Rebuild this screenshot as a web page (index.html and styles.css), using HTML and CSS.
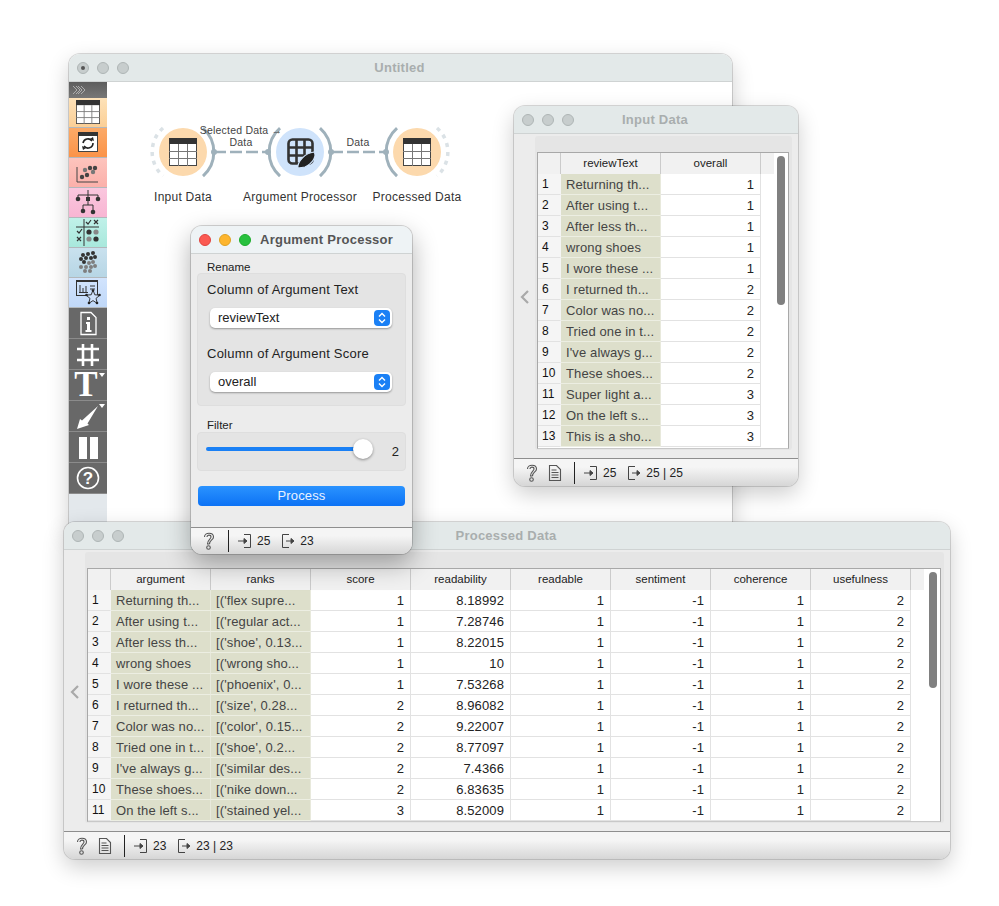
FILE: index.html
```html
<!DOCTYPE html>
<html lang="en">
<head>
<meta charset="utf-8">
<title>Orange workflow</title>
<link rel="stylesheet" href="styles.css">
</head>
<body>
<svg class="defs" width="0" height="0">
  <defs>
    <symbol id="tbl" viewBox="0 0 28 28">
      <rect x=".5" y=".5" width="27" height="27" fill="#fff" stroke="#444"/>
      <rect x="0" y="0" width="28" height="6" fill="#333"/>
      <path d="M9.5 6v22M18.5 6v22M0 13.5h28M0 20.5h28" stroke="#777" fill="none"/>
    </symbol>
    <symbol id="q" viewBox="0 0 14 20">
      <path d="M2.5 6C2.5 1 11.500 1 11.500 6C11.500 9 7.500 9 7.500 13M5 6C5 3.500 9 3.500 9 6C9 8 5.500 8.500 5.500 13H7.500" fill="none" stroke="#555" stroke-width="1.100"/>
      <circle cx="6.500" cy="16.500" r="1.800" fill="none" stroke="#555" stroke-width="1.100"/>
    </symbol>
    <symbol id="doc" viewBox="0 0 14 18">
      <path d="M1.500 1.500h7l4 4v11h-11zM3.500 6h5M3.500 8.500h7M3.500 11h7M3.500 13.500h7" fill="none" stroke="#555" stroke-width="1.100"/>
    </symbol>
    <symbol id="in" viewBox="0 0 14 16">
      <path d="M6 1.500h6.500v13H6" fill="none" stroke="#444"/>
      <path d="M0 8h8M6 5.500L9 8L6 10.500z" fill="#444" stroke="#444"/>
    </symbol>
    <symbol id="out" viewBox="0 0 14 16">
      <path d="M8 1.500H1.500v13H8" fill="none" stroke="#444"/>
      <path d="M5 8h6M10 5.500L13 8L10 10.500z" fill="#444" stroke="#444"/>
    </symbol>
  </defs>
</svg>

<section class="win win-main">
  <header class="titlebar"><span class="light dot"></span><span class="light"></span><span class="light"></span><h1 class="title">Untitled</h1></header>
  <div class="main-body">
    <nav class="toolbox">
      <div class="tb-head"><svg class="tb-chev" viewBox="0 0 14 10"><path d="M1 1l4 4-4 4M6 1l4 4-4 4M4 1l4 4-4 4M9 1l4 4-4 4" fill="none" stroke="#b5b5b5" stroke-width=".9"/></svg></div>
      <div class="tile t1"><svg class="tile-svg" viewBox="0 0 38 30"><use href="#tbl" x="7" y="2" width="24" height="24"/></svg></div>
      <div class="tile t2"><svg class="tile-svg" viewBox="0 0 38 30"><rect x="9.500" y="4.500" width="19" height="19" fill="#fff" stroke="#444"/><rect x="9" y="4" width="20" height="4" fill="#333"/><path d="M14 15a5 5 0 0 1 9-2M24 15a5 5 0 0 1-9 3" fill="none" stroke="#222" stroke-width="1.600"/><path d="M21 11l4 2-1-4zM17 20l-4-2 1 4z" fill="#222"/></svg></div>
      <div class="tile t3"><svg class="tile-svg" viewBox="0 0 38 30"><path d="M8 9v15h21" fill="none" stroke="#444"/><circle cx="13" cy="19" r="2.200" fill="#444"/><circle cx="18" cy="17" r="2.200" fill="#444"/><circle cx="16" cy="12" r="2.200" fill="#777"/><circle cx="21" cy="10" r="2.200" fill="#444"/><circle cx="24" cy="14" r="2.200" fill="#777"/><circle cx="26" cy="10" r="2.200" fill="#444"/></svg></div>
      <div class="tile t4"><svg class="tile-svg" viewBox="0 0 38 30"><path d="M9 7h20M19 2v15M9 7v3M29 7v3M14 17h10M14 17v5M24 17v5" fill="none" stroke="#333"/><circle cx="9" cy="11" r="2.300" fill="#333"/><circle cx="29" cy="11" r="2.300" fill="#333"/><rect x="17" y="9" width="4" height="4" fill="#333"/><circle cx="14" cy="23" r="2.300" fill="#333"/><circle cx="24" cy="24" r="2.300" fill="#333"/></svg></div>
      <div class="tile t5"><svg class="tile-svg" viewBox="0 0 38 30"><path d="M7 9h23M15 1v27" fill="none" stroke="#333"/><path d="M17 4l2 2 3-4M25 2l4 4M29 2l-4 4M8 13l2 2 3-4M8 19l4 4M12 19l-4 4" fill="none" stroke="#333" stroke-width="1.200"/><circle cx="20" cy="14" r="2.600" fill="#333"/><circle cx="27" cy="14" r="2.600" fill="#888"/><circle cx="20" cy="21" r="2.600" fill="#888"/><circle cx="27" cy="21" r="2.600" fill="#333"/></svg></div>
      <div class="tile t6"><svg class="tile-svg" viewBox="0 0 38 30"><g fill="#333"><circle cx="14" cy="7" r="2"/><circle cx="19" cy="6" r="2"/><circle cx="24" cy="5" r="2"/><circle cx="12" cy="11" r="2"/><circle cx="17" cy="10" r="2"/><circle cx="22" cy="10" r="2"/><circle cx="26" cy="9" r="2"/><circle cx="15" cy="14" r="2"/></g><g fill="#7f7f7f"><circle cx="20" cy="15" r="2"/><circle cx="24" cy="14" r="2"/><circle cx="12" cy="19" r="2"/><circle cx="17" cy="19" r="2"/><circle cx="22" cy="19" r="2"/><circle cx="26" cy="18" r="2"/><circle cx="16" cy="23" r="2"/><circle cx="21" cy="23" r="2"/></g></svg></div>
      <div class="tile t7"><svg class="tile-svg" viewBox="0 0 38 30"><rect x="7.500" y="2.500" width="21" height="15" fill="none" stroke="#333"/><rect x="7" y="2" width="22" height="2" fill="#333"/><path d="M11 7v7M14 10v4M17 8v6M10 14.500h9M21 8h5M21 11h5" stroke="#333" fill="none"/><path d="M24 12l1.800 4.800 5.200.3-4 3.300 1.300 5-4.300-2.800-4.300 2.800 1.300-5-4-3.300 5.200-.3z" fill="#cfe1fa" stroke="#222" stroke-width=".9"/><circle cx="24" cy="12.500" r="1.300" fill="#222"/><circle cx="30.500" cy="17" r="1.300" fill="#222"/><circle cx="17.500" cy="17" r="1.300" fill="#222"/><circle cx="28" cy="25" r="1.300" fill="#222"/><circle cx="20" cy="25" r="1.300" fill="#222"/></svg></div>
      <div class="tile dark"><svg class="tile-svg" viewBox="0 0 38 30"><path d="M12 4.500h10l5 5v17H12z" fill="none" stroke="#fff" stroke-width="1.300"/><rect x="18" y="9" width="3" height="3" fill="#fff"/><path d="M17 14h4v8h1.500v2h-6v-2H18v-6h-1z" fill="#fff"/></svg></div>
      <div class="tile dark"><svg class="tile-svg" viewBox="0 0 38 30"><path d="M14 5v22M23 5v22M8 10h22M8 21h22" fill="none" stroke="#fff" stroke-width="2.600"/></svg></div>
      <div class="tile dark"><span class="big-t">T</span><span class="caret"></span></div>
      <div class="tile dark"><svg class="tile-svg" viewBox="0 0 38 30"><path d="M8 28L11 18L13 19.500L29 5L18.500 22.500L20 24z" fill="#fff"/></svg><span class="caret"></span></div>
      <div class="tile dark"><svg class="tile-svg" viewBox="0 0 38 30"><rect x="10" y="5" width="8" height="22" fill="#fff"/><rect x="21" y="5" width="8" height="22" fill="#fff"/></svg></div>
      <div class="tile dark"><svg class="tile-svg" viewBox="0 0 38 30"><circle cx="19" cy="15" r="10.500" fill="none" stroke="#fff" stroke-width="1.600"/><text class="help-q" x="19" y="21" text-anchor="middle">?</text></svg></div>
    </nav>
    <svg class="scheme" viewBox="0 0 625 440" width="625" height="440">
      <g transform="translate(-107,-82)">
        <circle class="node-o" cx="183" cy="152" r="24"/>
        <circle class="node-b" cx="300" cy="152" r="24"/>
        <circle class="node-o" cx="417" cy="152" r="24"/>
        <use href="#tbl" x="169" y="138" width="28" height="28"/>
        <use href="#tbl" x="403" y="138" width="28" height="28"/>
        <g fill="none" stroke="#333" stroke-width="2.600">
          <rect x="288.500" y="139.500" width="24" height="24" rx="4"/>
          <path d="M296.500 140v23M304.500 140v23M288 147.500h25M288 155.500h25"/>
        </g>
        <path class="pen" d="M298 168c-1-6 7-15 16-16 3 4-1 11-9 15z"/>
        <path class="arc" d="M203 128A32 32 0 0 1 203 176"/>
        <path class="arc" d="M280 128A32 32 0 0 0 280 176"/>
        <path class="arc" d="M320 128A32 32 0 0 1 320 176"/>
        <path class="arc" d="M397 128A32 32 0 0 0 397 176"/>
        <path class="arc-off" d="M163 128A32 32 0 0 0 163 176"/>
        <path class="arc-off" d="M437 128A32 32 0 0 1 437 176"/>
        <path class="link" d="M214 152H268"/>
        <path class="link" d="M331 152H386"/>
        <circle class="pin" cx="214" cy="152" r="3"/>
        <circle class="pin" cx="268" cy="152" r="3"/>
        <circle class="pin" cx="331" cy="152" r="3"/>
        <circle class="pin" cx="386" cy="152" r="3"/>
        <text class="link-label" x="241" y="134">Selected Data →</text>
        <text class="link-label" x="241" y="146">Data</text>
        <text class="link-label" x="358" y="146">Data</text>
        <text class="node-label" x="183" y="201">Input Data</text>
        <text class="node-label" x="300" y="201">Argument Processor</text>
        <text class="node-label" x="417" y="201">Processed Data</text>
      </g>
    </svg>
  </div>
</section>

<section class="win win-input">
  <header class="titlebar"><span class="light"></span><span class="light"></span><span class="light"></span><h2 class="title">Input Data</h2></header>
  <div class="view-body">
    <div class="gutter"><svg class="chev" viewBox="0 0 10 14"><path d="M8 1L2 7l6 6" fill="none" stroke="#a9a9a9" stroke-width="2.200"/></svg></div>
    <div class="panel">
      <div class="tablebox">
        <table class="data">
          <thead><tr><th class="rn"></th><th>reviewText</th><th>overall</th></tr></thead>
          <tbody>
            <tr><td class="rn">1</td><td class="s">Returning th...</td><td class="n">1</td></tr>
            <tr><td class="rn">2</td><td class="s">After using t...</td><td class="n">1</td></tr>
            <tr><td class="rn">3</td><td class="s">After less th...</td><td class="n">1</td></tr>
            <tr><td class="rn">4</td><td class="s">wrong shoes</td><td class="n">1</td></tr>
            <tr><td class="rn">5</td><td class="s">I wore these ...</td><td class="n">1</td></tr>
            <tr><td class="rn">6</td><td class="s">I returned th...</td><td class="n">2</td></tr>
            <tr><td class="rn">7</td><td class="s">Color was no...</td><td class="n">2</td></tr>
            <tr><td class="rn">8</td><td class="s">Tried one in t...</td><td class="n">2</td></tr>
            <tr><td class="rn">9</td><td class="s">I've always g...</td><td class="n">2</td></tr>
            <tr><td class="rn">10</td><td class="s">These shoes...</td><td class="n">2</td></tr>
            <tr><td class="rn">11</td><td class="s">Super light a...</td><td class="n">3</td></tr>
            <tr><td class="rn">12</td><td class="s">On the left s...</td><td class="n">3</td></tr>
            <tr><td class="rn">13</td><td class="s">This is a sho...</td><td class="n">3</td></tr>
          </tbody>
        </table>
        <div class="scroll"><div class="thumb thumb-input"></div></div>
      </div>
    </div>
  </div>
  <footer class="status">
    <svg class="ic-q"><use href="#q"/></svg>
    <svg class="ic-doc"><use href="#doc"/></svg>
    <span class="sep"></span>
    <svg class="ic-io"><use href="#in"/></svg><span class="count c-in">25</span>
    <svg class="ic-io"><use href="#out"/></svg><span class="count">25 | 25</span>
  </footer>
</section>

<section class="win win-out">
  <header class="titlebar"><span class="light"></span><span class="light"></span><span class="light"></span><h2 class="title">Processed Data</h2></header>
  <div class="view-body">
    <div class="gutter"><svg class="chev" viewBox="0 0 10 14"><path d="M8 1L2 7l6 6" fill="none" stroke="#a9a9a9" stroke-width="2.200"/></svg></div>
    <div class="panel">
      <div class="tablebox">
        <table class="data">
          <thead><tr><th class="rn"></th><th>argument</th><th>ranks</th><th>score</th><th>readability</th><th>readable</th><th>sentiment</th><th>coherence</th><th>usefulness</th></tr></thead>
          <tbody>
            <tr><td class="rn">1</td><td class="s">Returning th...</td><td class="s">[('flex supre...</td><td class="n">1</td><td class="n">8.18992</td><td class="n">1</td><td class="n">-1</td><td class="n">1</td><td class="n">2</td></tr>
            <tr><td class="rn">2</td><td class="s">After using t...</td><td class="s">[('regular act...</td><td class="n">1</td><td class="n">7.28746</td><td class="n">1</td><td class="n">-1</td><td class="n">1</td><td class="n">2</td></tr>
            <tr><td class="rn">3</td><td class="s">After less th...</td><td class="s">[('shoe', 0.13...</td><td class="n">1</td><td class="n">8.22015</td><td class="n">1</td><td class="n">-1</td><td class="n">1</td><td class="n">2</td></tr>
            <tr><td class="rn">4</td><td class="s">wrong shoes</td><td class="s">[('wrong sho...</td><td class="n">1</td><td class="n">10</td><td class="n">1</td><td class="n">-1</td><td class="n">1</td><td class="n">2</td></tr>
            <tr><td class="rn">5</td><td class="s">I wore these ...</td><td class="s">[('phoenix', 0...</td><td class="n">1</td><td class="n">7.53268</td><td class="n">1</td><td class="n">-1</td><td class="n">1</td><td class="n">2</td></tr>
            <tr><td class="rn">6</td><td class="s">I returned th...</td><td class="s">[('size', 0.28...</td><td class="n">2</td><td class="n">8.96082</td><td class="n">1</td><td class="n">-1</td><td class="n">1</td><td class="n">2</td></tr>
            <tr><td class="rn">7</td><td class="s">Color was no...</td><td class="s">[('color', 0.15...</td><td class="n">2</td><td class="n">9.22007</td><td class="n">1</td><td class="n">-1</td><td class="n">1</td><td class="n">2</td></tr>
            <tr><td class="rn">8</td><td class="s">Tried one in t...</td><td class="s">[('shoe', 0.2...</td><td class="n">2</td><td class="n">8.77097</td><td class="n">1</td><td class="n">-1</td><td class="n">1</td><td class="n">2</td></tr>
            <tr><td class="rn">9</td><td class="s">I've always g...</td><td class="s">[('similar des...</td><td class="n">2</td><td class="n">7.4366</td><td class="n">1</td><td class="n">-1</td><td class="n">1</td><td class="n">2</td></tr>
            <tr><td class="rn">10</td><td class="s">These shoes...</td><td class="s">[('nike down...</td><td class="n">2</td><td class="n">6.83635</td><td class="n">1</td><td class="n">-1</td><td class="n">1</td><td class="n">2</td></tr>
            <tr><td class="rn">11</td><td class="s">On the left s...</td><td class="s">[('stained yel...</td><td class="n">3</td><td class="n">8.52009</td><td class="n">1</td><td class="n">-1</td><td class="n">1</td><td class="n">2</td></tr>
          </tbody>
        </table>
        <div class="scroll"><div class="thumb thumb-out"></div></div>
      </div>
    </div>
  </div>
  <footer class="status">
    <svg class="ic-q"><use href="#q"/></svg>
    <svg class="ic-doc"><use href="#doc"/></svg>
    <span class="sep"></span>
    <svg class="ic-io"><use href="#in"/></svg><span class="count c-in">23</span>
    <svg class="ic-io"><use href="#out"/></svg><span class="count">23 | 23</span>
  </footer>
</section>

<section class="win win-proc">
  <header class="titlebar"><span class="light red"></span><span class="light amber"></span><span class="light green"></span><h2 class="title title-active">Argument Processor</h2></header>
  <div class="proc-body">
    <div class="group-label">Rename</div>
    <div class="group group-rename">
      <div class="field-label">Column of Argument Text</div>
      <div class="combo"><span>reviewText</span><span class="combo-btn"><svg viewBox="0 0 12 16"><path d="M3 6.500L6 3.500l3 3M3 9.500l3 3 3-3" fill="none" stroke="#fff" stroke-width="1.400"/></svg></span></div>
      <div class="field-label second">Column of Argument Score</div>
      <div class="combo"><span>overall</span><span class="combo-btn"><svg viewBox="0 0 12 16"><path d="M3 6.500L6 3.500l3 3M3 9.500l3 3 3-3" fill="none" stroke="#fff" stroke-width="1.400"/></svg></span></div>
    </div>
    <div class="group-label filter-label">Filter</div>
    <div class="group group-filter">
      <div class="slider"><span class="knob"></span></div>
      <span class="slider-val">2</span>
    </div>
    <div class="process">Process</div>
  </div>
  <footer class="status">
    <svg class="ic-q"><use href="#q"/></svg>
    <span class="sep"></span>
    <svg class="ic-io"><use href="#in"/></svg><span class="count c-in">25</span>
    <svg class="ic-io"><use href="#out"/></svg><span class="count">23</span>
  </footer>
</section>
</body>
</html>
```
FILE: styles.css
```css
* { box-sizing: border-box; }
html, body { margin: 0; padding: 0; }
body {
  width: 999px;
  height: 906px;
  position: relative;
  overflow: hidden;
  background: #fff;
  font-family: "Liberation Sans", Arial, sans-serif;
  color: #222;
}
.defs { position: absolute; }

.win {
  position: absolute;
  display: flex;
  flex-direction: column;
  background: #ececec;
  border-radius: 11px;
  overflow: hidden;
  box-shadow: 0 0 0 1px rgba(0,0,0,.14), 0 8px 22px rgba(0,0,0,.2);
}
.win-main { left: 69px; top: 54px; width: 663px; height: 480px; background: #fff; }
.win-input { left: 514px; top: 106px; width: 284px; height: 380px; }
.win-out { left: 64px; top: 522px; width: 886px; height: 337px; }
.win-proc { left: 191px; top: 226px; width: 221px; height: 328px; box-shadow: 0 0 0 1px rgba(0,0,0,.16), 0 10px 26px rgba(0,0,0,.32); }
.win-proc .status { height: 27px; }

.titlebar {
  flex: none;
  height: 28px;
  display: flex;
  align-items: center;
  gap: 8px;
  padding-left: 8px;
  background: #e3e9e9;
  border-bottom: 1px solid #cfd3d3;
  position: relative;
}
.win-proc .titlebar { background: #eef3f5; padding-left: 8px; }
.light {
  width: 12px;
  height: 12px;
  border-radius: 50%;
  background: #c7cdcd;
  border: 1px solid #aeb5b5;
  display: flex;
  align-items: center;
  justify-content: center;
}
.dot::after { content: ""; width: 4px; height: 4px; border-radius: 50%; background: #555; }
.red { background: #fb5a52; border-color: #e0443e; }
.amber { background: #fdb52e; border-color: #dea123; }
.green { background: #28c13f; border-color: #1dad2b; }
.title {
  position: absolute;
  left: 0;
  right: 2px;
  margin: 0;
  text-align: center;
  font-size: 13px;
  font-weight: bold;
  letter-spacing: .25px;
  color: #a9aeae;
}
.title-active { color: #555; left: 69px; right: auto; }

.main-body { flex: 1; display: flex; min-height: 0; }
.toolbox { flex: none; width: 38px; display: flex; flex-direction: column; background: #e3e8ec; }
.tb-head { height: 16px; flex: none; background: linear-gradient(#5d5d5d, #777); padding: 3px 0 0 3px; }
.tb-chev { display: block; width: 14px; height: 10px; }
.tile { flex: none; height: 30px; position: relative; border-bottom: 1px solid #b3b8bc; }
.tile-svg { display: block; width: 38px; height: 30px; }
.t1 { background: linear-gradient(#fde2b9, #fbcf96); }
.t2 { background: linear-gradient(#fbaa68, #fb9348); }
.t3 { background: linear-gradient(#fdc4bd, #fbb0aa); }
.t4 { background: linear-gradient(#fac7de, #f8b5d3); }
.t5 { background: linear-gradient(#c0f1e9, #a8e8dc); }
.t6 { background: linear-gradient(#c9e1ee, #b7d6e5); }
.t7 { background: linear-gradient(#d2e4fd, #c0d8f8); }
.dark { background: #686868; border-bottom-color: #8b8b8b; height: 31px; }
.big-t { display: block; font-family: "Liberation Serif", serif; font-weight: bold; font-size: 35px; line-height: 30px; color: #fff; text-align: center; margin-right: 4px; }
.caret { position: absolute; right: 2px; top: 3px; width: 0; height: 0; border-left: 3px solid transparent; border-right: 3px solid transparent; border-top: 4px solid #fff; }
.help-q { fill: #fff; font-size: 17px; font-weight: bold; font-family: "Liberation Sans", sans-serif; }

.scheme { flex: none; display: block; }
.node-o { fill: #fcd9ad; }
.node-b { fill: #cfe3fb; }
.pen { fill: #222; stroke: #cfe3fb; stroke-width: 1.200; }
.arc { fill: none; stroke: #9fb1bb; stroke-width: 3; }
.arc-off { fill: none; stroke: #dbe2e6; stroke-width: 3.500; stroke-dasharray: 4 5; }
.link { stroke: #9fb1bb; stroke-width: 2.400; stroke-dasharray: 12 4; fill: none; }
.pin { fill: #9fb1bb; }
.link-label { font-size: 10.500px; letter-spacing: .2px; text-anchor: middle; fill: #444; }
.node-label { font-size: 12px; letter-spacing: .25px; text-anchor: middle; fill: #333; }

.view-body { flex: 1; display: flex; min-height: 0; padding-top: 2px; }
.gutter { flex: none; width: 21px; display: flex; align-items: center; justify-content: center; }
.chev { width: 10px; height: 14px; }
.panel { flex: 1; min-width: 0; background: #e5e5e5; border-radius: 3px; padding: 16px 3px 1px 2px; margin: 0 6px 8px 0; }
.tablebox {
  height: 100%;
  background: #fff;
  border: 1px solid #a8a8a8;
  border-bottom-color: #c8c8c8;
  overflow: hidden;
  display: flex;
}
.data { flex: none; border-collapse: separate; border-spacing: 0; table-layout: fixed; align-self: flex-start; }
.data th {
  width: 100px;
  height: 21px;
  padding: 0 0 2px;
  font-size: 11.500px;
  font-weight: normal;
  color: #222;
  background: #f1f1f1;
  border-right: 1px solid #cbcbcb;
}
.data td {
  height: 21px;
  padding: 0 5px;
  font-size: 13px;
  letter-spacing: .12px;
  white-space: nowrap;
  overflow: hidden;
  border-right: 1px solid #e2e2e2;
  border-bottom: 1px solid #e2e2e2;
}
.data th.rn, .data td.rn { width: 23px; }
.data th.rn { background: #f1f1f1; }
.data td.rn { background: #f5f5f5; font-size: 12px; letter-spacing: 0; padding: 0 0 0 4px; border-right-color: #f5f5f5; color: #111; }
.data td.s { background: #dddfcb; color: #444; border-right-color: #e8e9dc; border-bottom-color: #eceee2; }
.data td.n { text-align: right; color: #222; padding-right: 6px; background: #fff; }
.scroll { flex: 1; position: relative; }
.scroll::before { content: ""; position: absolute; left: 0; top: 0; width: 13px; height: 21px; background: #f1f1f1; }
.thumb { position: absolute; right: 3px; top: 3px; width: 8px; background: #808080; border-radius: 4px; }
.thumb-input { height: 149px; }
.thumb-out { height: 116px; }

.status {
  flex: none;
  height: 28px;
  display: flex;
  align-items: center;
  padding-left: 11px;
  background: linear-gradient(#f5f5f5 30%, #d6d6d6);
  border-top: 1px solid #8e8e8e;
}
.ic-q { width: 14px; height: 20px; flex: none; }
.ic-doc { width: 14px; height: 18px; flex: none; margin-left: 9px; }
.sep { width: 1px; height: 22px; background: #222; flex: none; margin: 0 9px 0 12px; }
.ic-io { width: 14px; height: 16px; flex: none; }
.count { font-size: 12px; color: #222; margin-left: 5px; }
.c-in { margin-right: 11px; }

.proc-body { flex: 1; display: flex; flex-direction: column; padding: 7px 6px 0; min-height: 0; }
.group-label { font-size: 11.500px; height: 12px; line-height: 12px; padding-left: 10px; }
.group { background: #e4e4e4; border: 1px solid #dedede; border-radius: 4px; }
.group-rename { height: 133px; padding: 8px 14px 0 9px; }
.field-label { font-size: 13px; letter-spacing: .25px; line-height: 15px; height: 15px; color: #222; }
.second { margin-top: 18px; }
.combo {
  margin: 11px 0 0 3px;
  height: 20px;
  width: 182px;
  border-radius: 5px;
  background: #fff;
  box-shadow: 0 1px 2px rgba(0,0,0,.35);
  display: flex;
  align-items: center;
  justify-content: space-between;
  padding: 0 2px 0 8px;
  font-size: 13px;
  line-height: 20px;
}
.combo-btn { width: 16px; height: 16px; border-radius: 4px; background: #1a80f5; display: flex; justify-content: center; }
.combo-btn svg { width: 12px; height: 16px; }
.filter-label { margin-top: 13px; }
.group-filter { height: 39px; margin-top: 1px; display: flex; align-items: center; padding: 0 6px 6px 8px; }
.slider { flex: none; width: 158px; height: 4px; border-radius: 2px; background: #1a80f5; position: relative; }
.knob { position: absolute; right: -9px; top: -8px; width: 20px; height: 20px; border-radius: 50%; background: #fff; box-shadow: 0 1px 3px rgba(0,0,0,.4); }
.slider-val { margin-left: auto; font-size: 13px; padding-top: 6px; }
.process {
  margin: 15px 1px 0;
  height: 20px;
  border-radius: 4px;
  background: linear-gradient(#2a93ff, #0c72f5);
  color: #e9f2ff;
  font-size: 13px;
  letter-spacing: .15px;
  line-height: 20px;
  text-align: center;
}
```
